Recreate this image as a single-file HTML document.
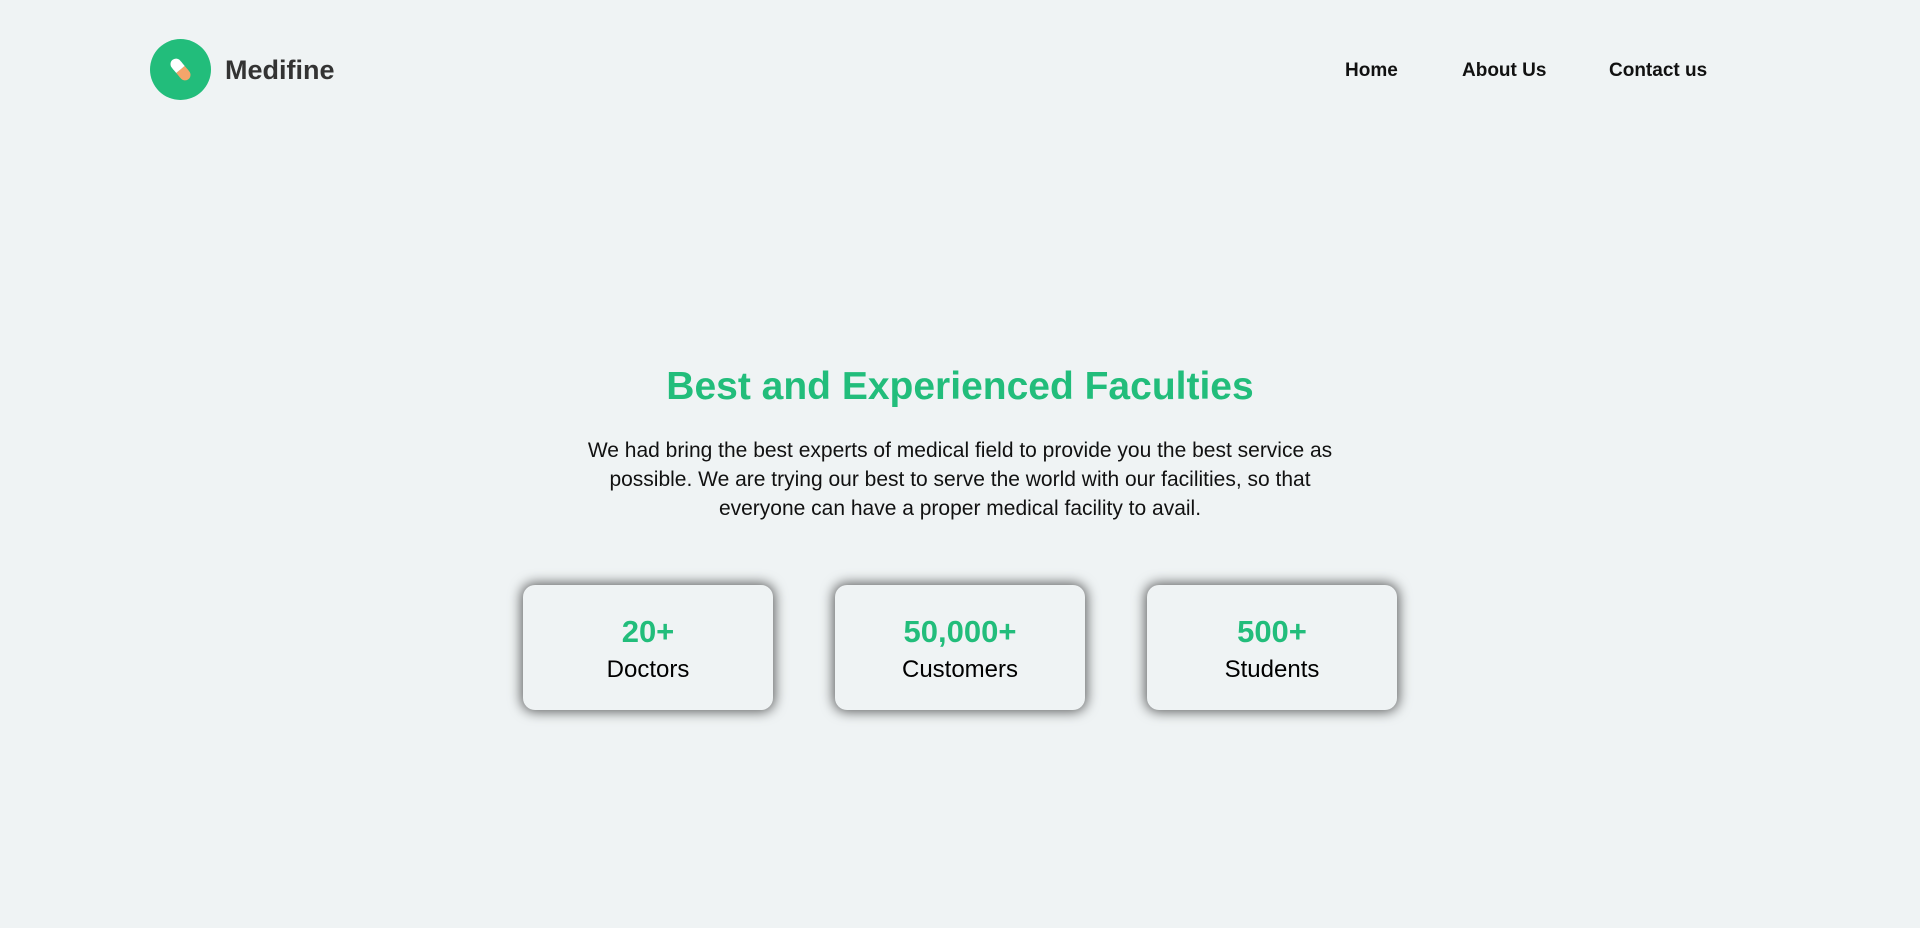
<!DOCTYPE html>
<html><head><meta charset="utf-8"><style>
*{margin:0;padding:0;box-sizing:border-box}
body{width:1920px;height:928px;background:#eff3f4;font-family:"Liberation Sans",sans-serif;position:relative;overflow:hidden;color:#000}
.logo{position:absolute;left:150px;top:39px;width:61px;height:61px;border-radius:50%;background:#22bd7b}
.brand{position:absolute;left:225px;top:55px;font-size:27px;font-weight:bold;color:#333}
.nav a{position:absolute;top:60px;font-size:19px;font-weight:bold;color:#111;text-decoration:none}
h1{position:absolute;left:0;width:1920px;top:365px;text-align:center;font-size:39px;color:#22bd7b}
p{position:absolute;left:575px;width:770px;top:436px;text-align:center;font-size:21px;line-height:29px;color:#111}
.card{position:absolute;top:585px;width:250px;height:125px;border-radius:12px;background:#eff3f4;box-shadow:0 0 12px 2px rgba(0,0,0,.6);text-align:center}
.card b{display:block;margin-top:30px;font-size:31px;color:#22bd7b;line-height:34px}
.card span{display:block;font-size:24px;line-height:34px;margin-top:4px}
</style></head><body>
<div class="logo"><svg width="61" height="61" viewBox="0 0 61 61"><g transform="rotate(-40 30.5 30.5)"><rect x="25" y="18" width="11" height="12.5" rx="5.5" fill="#fff"/><rect x="25" y="30.5" width="11" height="12.5" rx="5.5" fill="#f5a56b"/><rect x="25" y="25" width="11" height="5.5" fill="#fff"/><rect x="25" y="30.5" width="11" height="5.5" fill="#f5a56b"/></g></svg></div>
<div class="brand">Medifine</div>
<div class="nav"><a style="left:1345px">Home</a><a style="left:1462px">About Us</a><a style="left:1609px">Contact us</a></div>
<h1>Best and Experienced Faculties</h1>
<p>We had bring the best experts of medical field to provide you the best service as possible. We are trying our best to serve the world with our facilities, so that everyone can have a proper medical facility to avail.</p>
<div class="card" style="left:523px"><b>20+</b><span>Doctors</span></div>
<div class="card" style="left:835px"><b>50,000+</b><span>Customers</span></div>
<div class="card" style="left:1147px"><b>500+</b><span>Students</span></div>
</body></html>
